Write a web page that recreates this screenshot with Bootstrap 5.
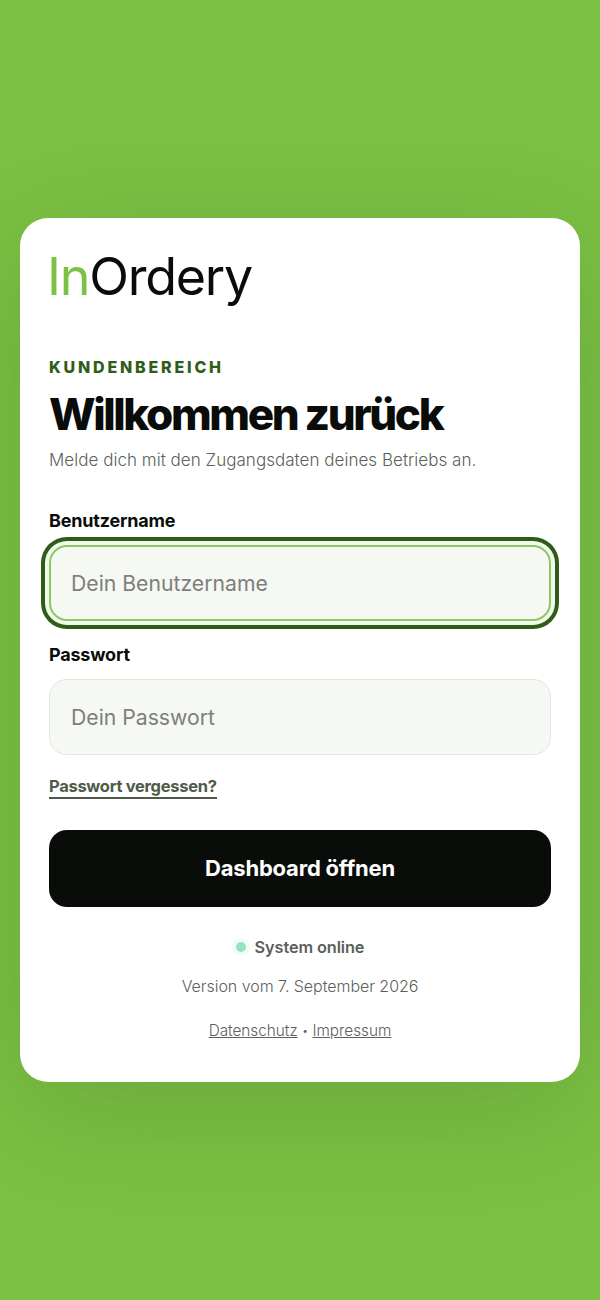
<!DOCTYPE html>
<html lang="de">
<head>
<meta charset="utf-8">
<meta name="viewport" content="width=device-width, initial-scale=1">
<title>InOrdery</title>
<link href="https://cdn.jsdelivr.net/npm/bootstrap@5.3.0/dist/css/bootstrap.min.css" rel="stylesheet">
<style>
html,body{height:100%}
body{background:#7bc144;font-family:"Inter","Liberation Sans",sans-serif;color:#0a0c0a}
.login-stage{min-height:1300px;padding:0 20px}
.login-panel{width:560px;height:864px;background:#fff;border-radius:28px;padding:29px 29px 0;box-shadow:0 28px 120px rgba(40,70,20,.2)}
.brand-word{font-size:52px;line-height:64px;font-weight:400;letter-spacing:-1.25px;color:#0a0c0a;margin:-2px 0 0 -2px}
.brand-word span{color:#7bc144}
.eyebrow-text{font-size:16px;line-height:20px;font-weight:800;letter-spacing:2.8px;color:#2f5d17;margin-top:48px}
.welcome-title{font-size:44px;line-height:50px;font-weight:800;letter-spacing:-2.4px;color:#0a0c0a;margin:12px 0 8px}
.welcome-sub{font-size:17px;line-height:26px;font-weight:300;color:#5c5f5c;letter-spacing:.03px;margin:0 0 36px}
.field-label{display:block;font-size:18px;line-height:24px;font-weight:700;color:#0a0c0a;margin-bottom:12px;letter-spacing:-.2px}
.field-input.form-control{height:76px;background:#f6f8f4;border:1px solid #e3e5e0;border-radius:18px;padding:0 21px;font-size:21.2px;font-weight:400;color:#0a0c0a}
.field-input.form-control::placeholder{color:#7c7f7c;opacity:1}
.field-input.is-on.form-control{border:2px solid #8ec866;padding:0 20px;box-shadow:0 0 0 4px #f0fbe9,0 0 0 8px #2f5d17}
.field-gap{margin-bottom:22px}
.forgot-link{display:inline-block;font-size:16.5px;line-height:21px;font-weight:700;color:#4d5b48;letter-spacing:-.3px;text-decoration:none;border-bottom:2px solid #4d5b48;margin-top:21px}
.cta-btn.btn{display:block;width:100%;height:77px;margin-top:31px;background:#0a0c0a;color:#fff;border:0;border-radius:18px;font-size:22px;font-weight:700;letter-spacing:-.2px}
.status-row{margin-top:28px;font-size:16.3px;line-height:24px;font-weight:600;color:#5c5f5c;letter-spacing:-.1px}
.status-dot{width:10px;height:10px;border-radius:50%;background:#93e4c0;box-shadow:0 0 0 4px #f2fbf7;margin-right:9px}
.version-text{font-size:16px;line-height:24px;font-weight:300;color:#5c5f5c;margin-top:15px;letter-spacing:-.05px}
.legal-row{font-size:15.3px;line-height:24px;font-weight:300;color:#5c5f5c;margin-top:21px}
.legal-row a{color:#5c5f5c}
.legal-sep{font-size:11px;vertical-align:1px}
</style>
</head>
<body>
<main class="login-stage d-flex align-items-center justify-content-center">
  <section class="login-panel">
    <div class="brand-word"><span>In</span>Ordery</div>
    <div class="eyebrow-text">KUNDENBEREICH</div>
    <h1 class="welcome-title">Willkommen zurück</h1>
    <p class="welcome-sub">Melde dich mit den Zugangsdaten deines Betriebs an.</p>
    <form>
      <div class="field-gap">
        <label class="field-label" for="u">Benutzername</label>
        <input id="u" class="form-control field-input is-on" type="text" placeholder="Dein Benutzername">
      </div>
      <div>
        <label class="field-label" for="p">Passwort</label>
        <input id="p" class="form-control field-input" type="password" placeholder="Dein Passwort">
      </div>
      <a class="forgot-link" href="#">Passwort vergessen?</a>
      <button class="btn cta-btn" type="button">Dashboard öffnen</button>
    </form>
    <div class="status-row d-flex align-items-center justify-content-center"><span class="status-dot"></span>System online</div>
    <div class="version-text text-center">Version vom 7. September 2026</div>
    <div class="legal-row text-center"><a href="#">Datenschutz</a> <span class="legal-sep">•</span> <a href="#">Impressum</a></div>
  </section>
</main>
</body>
</html>
